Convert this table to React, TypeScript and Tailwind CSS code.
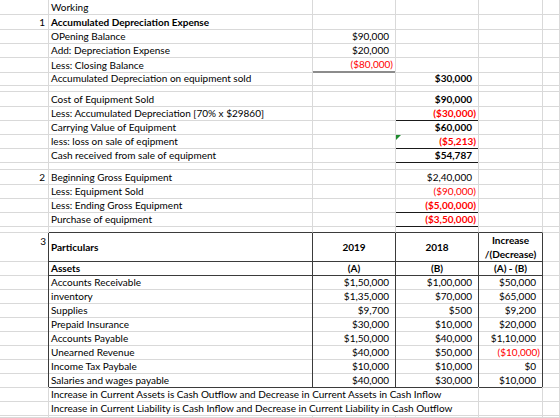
type Border = 'grid' | 'dark' | 'black' | 'gray' | 'none';

const rightCls: Record<Border, string> = {
  grid: 'border-r border-r-[#d9d9d9]',
  dark: 'border-r border-r-[#3b3b3b]',
  black: 'border-r border-r-black',
  gray: 'border-r border-r-[#8c8c8c]',
  none: '',
};

const bottomCls: Record<Border, string> = {
  grid: 'border-b border-b-[#d9d9d9]',
  dark: 'border-b border-b-[#3b3b3b]',
  black: 'border-b border-b-[#1a1a1a]',
  gray: 'border-b-2 border-b-[#8c8c8c]',
  none: '',
};

type CellSpec = {
  text?: string;
  align?: 'left' | 'right' | 'center' | 'num' | 'top';
  bold?: boolean;
  red?: boolean;
  r?: Border;
  b?: Border;
  span?: boolean;
  flag?: boolean;
};

type RowSpec = { h: string; cells: CellSpec[] };

const E: CellSpec = {};
const T: CellSpec = { r: 'dark' };

function label(text: string, bold = false): CellSpec {
  return { text, bold, align: 'left' };
}

function num(text: string, opts: Partial<CellSpec> = {}): CellSpec {
  return { text, align: 'num', red: text.startsWith('('), ...opts };
}

function idx(n: string): CellSpec {
  return { text: n, align: 'right' };
}

const rows: RowSpec[] = [
  { h: 'h-[15px]', cells: [E, label('Working'), E, E, E, E] },
  { h: 'h-[14px]', cells: [idx('1'), label('Accumulated Depreciation Expense', true), E, E, E, E] },
  { h: 'h-[14px]', cells: [E, label('OPening Balance'), num('$90,000'), E, E, E] },
  { h: 'h-[14px]', cells: [E, label('Add: Depreciation Expense'), num('$20,000'), E, E, E] },
  { h: 'h-[14px]', cells: [E, label('Less: Closing Balance'), num('($80,000)', { b: 'gray' }), E, E, E] },
  { h: 'h-[14px]', cells: [E, label('Accumulated Depreciation on equipment sold'), E, num('$30,000', { bold: true }), E, E] },
  { h: 'h-[7px]', cells: [E, E, E, E, E, E] },
  { h: 'h-[14px]', cells: [E, label('Cost of Equipment Sold'), E, num('$90,000', { bold: true }), E, E] },
  { h: 'h-[14px]', cells: [E, label('Less: Accumulated Depreciation [70% x $29860]'), E, num('($30,000)', { bold: true, b: 'black' }), E, E] },
  { h: 'h-[14px]', cells: [E, label('Carrying Value of Equipment'), E, num('$60,000', { bold: true }), E, E] },
  { h: 'h-[14px]', cells: [E, label('less: loss on sale of eqipment'), E, num('($5,213)', { bold: true, b: 'black', flag: true }), E, E] },
  { h: 'h-[14px]', cells: [E, label('Cash received from sale of equipment'), E, num('$54,787', { bold: true, b: 'black' }), E, E] },
  { h: 'h-[8px]', cells: [E, E, E, E, E, E] },
  { h: 'h-[14px]', cells: [idx('2'), label('Beginning Gross Equipment'), E, num('$2,40,000'), E, E] },
  { h: 'h-[14px]', cells: [E, label('Less: Equipment Sold'), E, num('($90,000)'), E, E] },
  { h: 'h-[14px]', cells: [E, label('Less: Ending Gross Equipment'), E, num('($5,00,000)', { bold: true, b: 'black' }), E, E] },
  { h: 'h-[14px]', cells: [E, label('Purchase of equipment'), E, num('($3,50,000)', { bold: true, b: 'black' }), E, E] },
  { h: 'h-[7px]', cells: [E, { b: 'dark' }, { b: 'dark' }, { b: 'dark' }, { b: 'dark' }, E] },
  {
    h: 'h-[28px]',
    cells: [
      { text: '3', align: 'top', r: 'dark' },
      { text: 'Particulars', bold: true, align: 'left', r: 'dark', b: 'dark' },
      { text: '2019', bold: true, align: 'center', r: 'dark', b: 'dark' },
      { text: '2018', bold: true, align: 'center', r: 'dark', b: 'dark' },
      { text: 'Increase\n/(Decrease)', bold: true, align: 'center', r: 'dark', b: 'dark' },
      E,
    ],
  },
  {
    h: 'h-[14px]',
    cells: [
      T,
      { text: 'Assets', bold: true, align: 'left', r: 'dark', b: 'dark' },
      { text: '(A)', bold: true, align: 'center', r: 'dark', b: 'dark' },
      { text: '(B)', bold: true, align: 'center', r: 'dark', b: 'dark' },
      { text: '(A) - (B)', bold: true, align: 'center', r: 'dark', b: 'dark' },
      E,
    ],
  },
];

const tableData: [string, string, string, string][] = [
  ['Accounts Receivable', '$1,50,000', '$1,00,000', '$50,000'],
  ['inventory', '$1,35,000', '$70,000', '$65,000'],
  ['Supplies', '$9,700', '$500', '$9,200'],
  ['Prepaid Insurance', '$30,000', '$10,000', '$20,000'],
  ['Accounts Payable', '$1,50,000', '$40,000', '$1,10,000'],
  ['Unearned Revenue', '$40,000', '$50,000', '($10,000)'],
  ['Income Tax Paybale', '$10,000', '$10,000', '$0'],
  ['Salaries and wages payable', '$40,000', '$30,000', '$10,000'],
];

tableData.forEach(([name, a, b, diff], i) => {
  const last = i === tableData.length - 1;
  const bb: Border = last ? 'dark' : 'grid';
  rows.push({
    h: 'h-[14px]',
    cells: [
      T,
      { text: name, align: 'left', r: 'dark', b: bb },
      num(a, { r: 'dark', b: bb }),
      num(b, { r: 'dark', b: bb }),
      num(diff, { r: 'dark', b: bb }),
      E,
    ],
  });
});

rows.push(
  {
    h: 'h-[14px]',
    cells: [E, { text: 'Increase in Current Assets is Cash Outflow and Decrease in Current Assets in Cash Inflow', align: 'left', span: true }, E, E],
  },
  {
    h: 'h-[14px]',
    cells: [E, { text: 'Increase in Current Liability is Cash Inflow and Decrease in Current Liability in Cash Outflow', align: 'left', span: true }, E, E],
  },
  { h: 'h-[3px]', cells: [E, E, E, E, E, E] },
);

function Cell({ cell }: { cell: CellSpec }) {
  const align = cell.align ?? 'left';
  const red = cell.red ?? false;
  let pos = 'items-center justify-start pl-[2px]';
  if (align === 'right') pos = 'items-center justify-end pr-[3px]';
  if (align === 'center') pos = 'items-center justify-center text-center';
  if (align === 'top') pos = 'items-start justify-end pr-[2px] pt-[1px]';
  if (align === 'num') pos = red ? 'items-center justify-end pr-[2px]' : 'items-center justify-end pr-[6px]';

  return (
    <div
      className={[
        'relative flex min-w-0 whitespace-pre leading-[14px]',
        rightCls[cell.r ?? 'grid'],
        bottomCls[cell.b ?? 'grid'],
        pos,
        cell.span ? 'col-span-3' : '',
        cell.bold ? 'font-bold' : 'font-normal',
        red ? 'text-[#ff0000]' : 'text-black',
      ].join(' ')}
    >
      {cell.flag && (
        <svg className="absolute left-0 top-[1px]" width="5" height="5" viewBox="0 0 5 5">
          <polygon points="0,0 5,0 0,5" fill="#1e8b2e" />
        </svg>
      )}
      {cell.text}
    </div>
  );
}

export default function App() {
  return (
    <div className="h-[418px] w-[560px] overflow-hidden bg-white font-['Lato',sans-serif] text-[10px]">
      {rows.map((row, i) => (
        <div key={i} className={`grid grid-cols-[49px_264px_83px_83px_64px_1fr] ${row.h}`}>
          {row.cells.map((cell, j) => (
            <Cell key={j} cell={cell} />
          ))}
        </div>
      ))}
    </div>
  );
}
